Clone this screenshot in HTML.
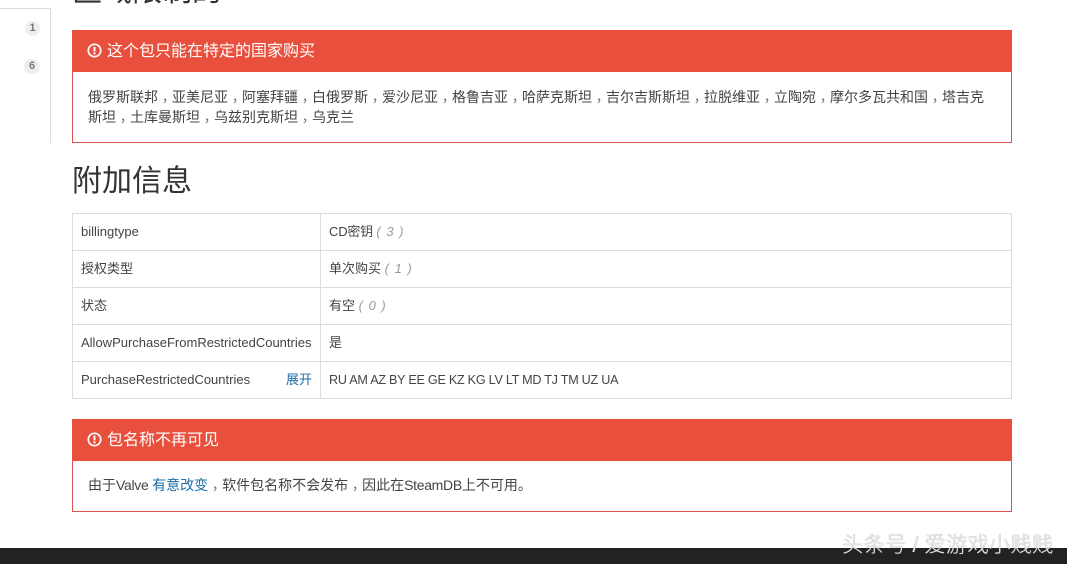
<!DOCTYPE html>
<html><head><meta charset="utf-8"><style>
html,body{margin:0;padding:0}
body{width:1067px;height:564px;position:relative;overflow:hidden;background:#fff;font-family:"Liberation Sans","Noto Sans CJK SC",sans-serif;color:#444;font-size:13px}
.a{position:absolute;white-space:nowrap}
.box{position:absolute;left:72px;width:938px;border:1px solid #d9534f;border-top:0}
.hd{position:absolute;left:72px;width:940px;height:42px;background:#e94f3d;color:#fff;font-size:16px;line-height:42px}
.hd svg{position:absolute;left:15px;top:13px}
.hd span{position:absolute;left:35px;top:1px}
.h{position:absolute;left:72px;height:1px;width:940px;background:#ddd}
.v{position:absolute;width:1px;background:#ddd}
.t{position:absolute;white-space:nowrap;line-height:18px;font-size:13px;color:#444}
i{color:#999;font-style:italic;letter-spacing:1px}
a{color:#1a6ea8}
b{font-family:"Noto Sans CJK TC",sans-serif;font-weight:normal;position:relative;top:4px;color:#777}
.n{letter-spacing:-.3px}
.b{position:absolute;left:25px;width:15px;height:15px;border-radius:8px;background:#eee;color:#777;font-size:11px;font-weight:bold;text-align:center;line-height:15px}
</style></head><body>
<div class="a" style="left:72px;top:-25px;font-size:30px;color:#333;line-height:34px">区域限制的</div>
<div class="a" style="left:0;top:8px;width:50px;height:1px;background:#ddd"></div>
<div class="a" style="left:50px;top:8px;width:1px;height:135px;background:#ddd"></div>
<div class="b" style="top:21px">1</div>
<div class="b" style="top:59px;left:24px;width:16px">6</div>

<div class="hd" style="top:30px"><svg width="15" height="15" viewBox="0 0 15 15"><circle cx="7.5" cy="7.5" r="6.2" fill="none" stroke="#fff" stroke-width="1.7"/><rect x="6.5" y="3.6" width="2" height="4.8" fill="#fff"/><rect x="6.5" y="9.4" width="2" height="2" fill="#fff"/></svg><span>这个包只能在特定的国家购买</span></div>
<div class="box" style="top:72px;height:70px"></div>
<div class="t" style="left:88px;top:87px;width:900px;height:40px;line-height:20px;white-space:normal;font-size:14px">俄罗斯联邦<b>，</b>亚美尼亚<b>，</b>阿塞拜疆<b>，</b>白俄罗斯<b>，</b>爱沙尼亚<b>，</b>格鲁吉亚<b>，</b>哈萨克斯坦<b>，</b>吉尔吉斯斯坦<b>，</b>拉脱维亚<b>，</b>立陶宛<b>，</b>摩尔多瓦共和国<b>，</b>塔吉克<br>斯坦<b>，</b>土库曼斯坦<b>，</b>乌兹别克斯坦<b>，</b>乌克兰</div>

<div class="a" style="left:72px;top:163px;font-size:30px;color:#333;line-height:38px">附加信息</div>

<div class="h" style="top:213px"></div>
<div class="h" style="top:250px"></div>
<div class="h" style="top:287px"></div>
<div class="h" style="top:324px"></div>
<div class="h" style="top:361px"></div>
<div class="h" style="top:398px"></div>
<div class="v" style="left:72px;top:213px;height:186px"></div>
<div class="v" style="left:320px;top:213px;height:186px"></div>
<div class="v" style="left:1011px;top:213px;height:186px"></div>

<div class="t" style="left:81px;top:223px">billingtype</div>
<div class="t" style="left:329px;top:223px;letter-spacing:-.2px">CD密钥 <i>(&nbsp;3&nbsp;)</i></div>
<div class="t" style="left:81px;top:260px">授权类型</div>
<div class="t" style="left:329px;top:260px">单次购买 <i>(&nbsp;1&nbsp;)</i></div>
<div class="t" style="left:81px;top:297px">状态</div>
<div class="t" style="left:329px;top:297px">有空 <i>(&nbsp;0&nbsp;)</i></div>
<div class="t" style="left:81px;top:334px">AllowPurchaseFromRestrictedCountries</div>
<div class="t" style="left:329px;top:334px">是</div>
<div class="t" style="left:81px;top:371px">PurchaseRestrictedCountries</div>
<div class="t" style="left:286px;top:371px"><a>展开</a></div>
<div class="t" style="left:329px;top:371px;font-size:12.6px;letter-spacing:-.25px">RU AM AZ BY EE GE KZ KG LV LT MD TJ TM UZ UA</div>

<div class="hd" style="top:419px"><svg width="15" height="15" viewBox="0 0 15 15"><circle cx="7.5" cy="7.5" r="6.2" fill="none" stroke="#fff" stroke-width="1.7"/><rect x="6.5" y="3.6" width="2" height="4.8" fill="#fff"/><rect x="6.5" y="9.4" width="2" height="2" fill="#fff"/></svg><span>包名称不再可见</span></div>
<div class="box" style="top:461px;height:50px"></div>
<div class="t" style="left:88px;top:476px;font-size:14px">由于<span class="n">Valve </span><a>有意改变</a><b>，</b>软件包名称不会发布<b>，</b>因此在<span class="n">SteamDB</span>上不可用。</div>

<div class="a" style="left:0;top:548px;width:1067px;height:16px;background:#222"></div>
<div class="a" style="left:842px;top:531px;font-size:21.5px;line-height:28px;color:#e8e8e8;font-weight:300;text-shadow:0 0 1px #888">头条号 / 爱游戏小贱贱</div>
</body></html>
